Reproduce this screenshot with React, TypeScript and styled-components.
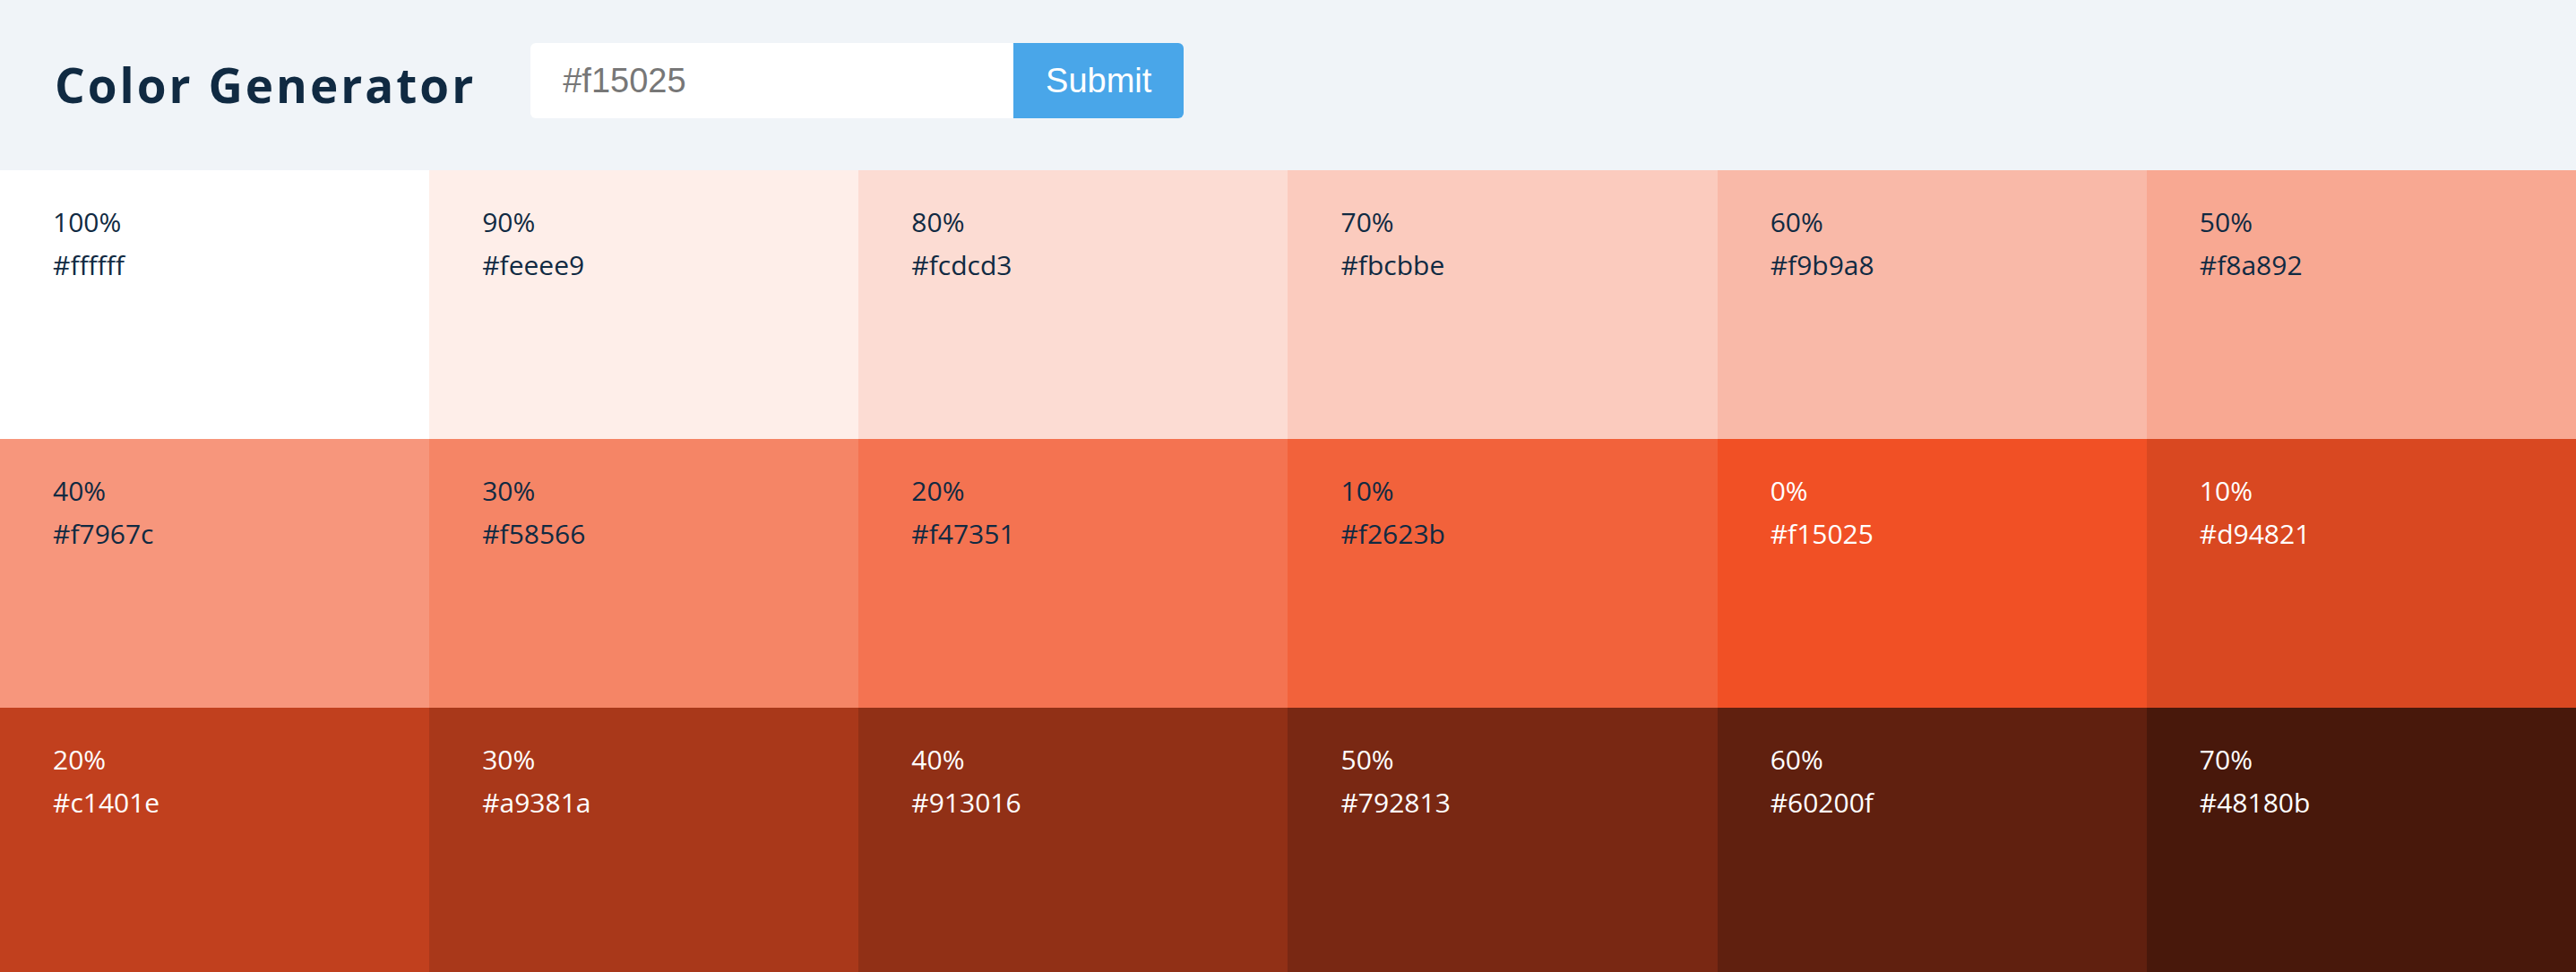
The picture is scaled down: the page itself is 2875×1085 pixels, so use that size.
import React from "react";
import styled, { createGlobalStyle } from "styled-components";

const GlobalStyle = createGlobalStyle`
  * { box-sizing: border-box; margin: 0; padding: 0; }
  html, body { margin: 0; background: #ffffff; overflow: hidden; }
  body { font-family: "Open Sans", "Liberation Sans", sans-serif; color: #102a42; }
`;

const Header = styled.header`
  display: flex;
  align-items: center;
  height: 190px;
  padding-left: 61px;
  gap: 61px;
  background: #f0f4f8;
`;

const Title = styled.h3`
  font-family: "Open Sans", sans-serif;
  font-size: 53px;
  font-weight: 700;
  letter-spacing: 3px;
  color: #102a42;
  margin-top: -2px;
`;

const Form = styled.form`
  display: flex;
  height: 84px;
  margin-top: -10px;
`;

const Input = styled.input`
  width: 539px;
  height: 100%;
  border: none;
  outline: none;
  background: #ffffff;
  border-radius: 6px 0 0 6px;
  padding-left: 36px;
  font-family: "Liberation Sans", Arial, sans-serif;
  font-size: 38px;
  color: #777777;
`;

const Button = styled.button`
  width: 190px;
  height: 100%;
  border: none;
  background: #49a6e9;
  color: #ffffff;
  border-radius: 0 6px 6px 0;
  font-family: "Liberation Sans", Arial, sans-serif;
  font-size: 38px;
  cursor: pointer;
`;

const Grid = styled.section`
  display: grid;
  grid-template-columns: repeat(6, 1fr);
  grid-auto-rows: 300px;
`;

const Cell = styled.article<{ $bg: string; $light: boolean }>`
  background: ${(p) => p.$bg};
  color: ${(p) => (p.$light ? "#ffffff" : "#102a42")};
  padding: 34px 59px;
  font-family: "Open Sans", sans-serif;
  font-size: 30px;
  line-height: 48px;
`;

const Line = styled.p`
  margin: 0;
`;

const colors: [string, string][] = [
  ["100%", "#ffffff"],
  ["90%", "#feeee9"],
  ["80%", "#fcdcd3"],
  ["70%", "#fbcbbe"],
  ["60%", "#f9b9a8"],
  ["50%", "#f8a892"],
  ["40%", "#f7967c"],
  ["30%", "#f58566"],
  ["20%", "#f47351"],
  ["10%", "#f2623b"],
  ["0%", "#f15025"],
  ["10%", "#d94821"],
  ["20%", "#c1401e"],
  ["30%", "#a9381a"],
  ["40%", "#913016"],
  ["50%", "#792813"],
  ["60%", "#60200f"],
  ["70%", "#48180b"],
];

export default function App() {
  return (
    <>
      <GlobalStyle />
      <Header>
        <Title>Color Generator</Title>
        <Form onSubmit={(e) => e.preventDefault()}>
          <Input defaultValue="#f15025" />
          <Button type="submit">Submit</Button>
        </Form>
      </Header>
      <Grid>
        {colors.map(([w, hex], i) => (
          <Cell key={i} $bg={hex} $light={i > 9}>
            <Line>{w}</Line>
            <Line>{hex}</Line>
          </Cell>
        ))}
      </Grid>
    </>
  );
}
